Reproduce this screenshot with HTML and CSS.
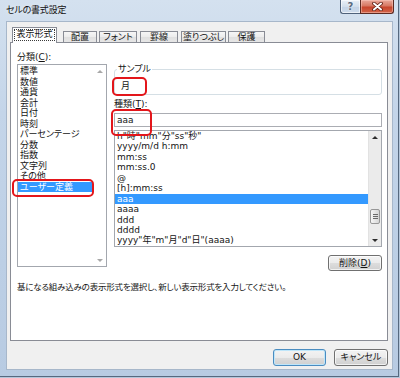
FILE: index.html
```html
<!DOCTYPE html>
<html lang="ja">
<head>
<meta charset="utf-8">
<title>セルの書式設定</title>
<link rel="stylesheet" href="styles.css">
</head>
<body>
<div class="window">
  <div class="titlebar">
    <span class="title">セルの書式設定</span>
    <div class="caption">
      <div class="cap-help">?</div>
      <div class="cap-close">
        <svg width="11" height="9" viewBox="0 0 11 9">
          <path d="M2 1.5 L9 7.5 M9 1.5 L2 7.5" stroke="#5a1a10" stroke-width="3.6" stroke-linecap="round"/>
          <path d="M2 1.5 L9 7.5 M9 1.5 L2 7.5" stroke="#ffffff" stroke-width="2" stroke-linecap="round"/>
        </svg>
      </div>
    </div>
  </div>
  <div class="client">
    <div class="tabs">
      <div class="tab active"><span class="focus">表示形式</span></div>
      <div class="tab w-haichi">配置</div>
      <div class="tab w-font">フォント</div>
      <div class="tab w-kei">罫線</div>
      <div class="tab w-nuri">塗りつぶし</div>
      <div class="tab w-hogo">保護</div>
    </div>
    <div class="panel">
      <div class="cols">
        <div class="col-left">
          <div class="label">分類(<u>C</u>):</div>
          <div class="listbox cat">
            <ul class="items">
              <li>標準</li>
              <li>数値</li>
              <li>通貨</li>
              <li>会計</li>
              <li>日付</li>
              <li>時刻</li>
              <li>パーセンテージ</li>
              <li>分数</li>
              <li>指数</li>
              <li>文字列</li>
              <li>その他</li>
              <li class="sel mark m-cat">ユーザー定義</li>
            </ul>
            <div class="vscroll off">
              <div class="sbtn up"></div>
              <div class="track"></div>
              <div class="sbtn down"></div>
            </div>
          </div>
        </div>
        <div class="col-right">
          <fieldset class="sample">
            <legend>サンプル</legend>
            <span class="sample-val mark m-sample">月</span>
          </fieldset>
          <div class="label t-label">種類(<u>T</u>):</div>
          <div class="textbox mark m-input">aaa</div>
          <div class="listbox fmt">
            <ul class="items">
              <li>h"時"mm"分"ss"秒"</li>
              <li>yyyy/m/d h:mm</li>
              <li>mm:ss</li>
              <li>mm:ss.0</li>
              <li>@</li>
              <li>[h]:mm:ss</li>
              <li class="sel">aaa</li>
              <li>aaaa</li>
              <li>ddd</li>
              <li>dddd</li>
              <li>yyyy"年"m"月"d"日"(aaaa)</li>
            </ul>
            <div class="vscroll">
              <div class="sbtn up"></div>
              <div class="track"><div class="thumb"><i></i><i></i><i></i></div></div>
              <div class="sbtn down"></div>
            </div>
          </div>
          <div class="del-row"><button class="btn del">削除(<u>D</u>)</button></div>
        </div>
      </div>
      <p class="desc">基になる組み込みの表示形式を選択し、新しい表示形式を入力してください。</p>
    </div>
    <div class="footer">
      <button class="btn ok">OK</button>
      <button class="btn cancel">キャンセル</button>
    </div>
  </div>
</div>
</body>
</html>
```
FILE: styles.css
```css
* { box-sizing: border-box; }
html, body { margin: 0; padding: 0; }
body {
  width: 400px;
  height: 378px;
  overflow: hidden;
  background: #b4c6da;
  font-family: "DejaVu Sans", "Noto Sans CJK JP", sans-serif;
  font-size: 9px;
  color: #141414;
  font-feature-settings: "palt";
}

.window {
  width: 399px;
  height: 377px;
  border-right: 1px solid #56697f;
  border-bottom: 1px solid #56697f;
  background: linear-gradient(#d4e1ef, #c4d5e9 30%, #bccfe5 70%, #b8cbe2);
  display: flex;
  flex-direction: column;
}

.titlebar {
  height: 21px;
  flex: none;
  display: flex;
  justify-content: space-between;
  align-items: flex-start;
  padding: 0 4px 0 6px;
}
.title {
  line-height: 20px;
  letter-spacing: -0.2px;
  color: #101010;
  text-shadow: 0 0 4px #e8f0f8;
}
.caption { display: flex; }
.cap-help {
  width: 20px;
  height: 14px;
  border: 1px solid #4f627b;
  border-top: 0;
  border-right: 0;
  border-radius: 0 0 0 3px;
  background: linear-gradient(#e9f0f8, #d3dfec 50%, #c3d3e6 51%, #cddbeb);
  box-shadow: inset 0 0 0 1px rgba(255,255,255,0.6);
  text-align: center;
  font-weight: bold;
  line-height: 13px;
  font-size: 10px;
  color: #5a6b80;
  text-shadow: 0 0 2px #fff;
}
.cap-close {
  width: 34px;
  height: 14px;
  border: 1px solid #5b2a22;
  border-top: 0;
  border-radius: 0 0 3px 0;
  background: linear-gradient(#e9a99b, #d77863 45%, #c7452c 55%, #d2664b);
  box-shadow: inset 0 0 0 1px rgba(255,210,200,0.45);
  display: flex;
  align-items: center;
  justify-content: center;
}

.client {
  flex: 1;
  margin: 0 5px 6px 6px;
  background: #f0f0f0;
  border: 1px solid #a7b7ca;
  padding: 5px 4px 3px 3px;
  display: flex;
  flex-direction: column;
}

/* tabs */
.tabs {
  display: flex;
  align-items: flex-start;
  height: 16px;
  padding-left: 2px;
  position: relative;
  z-index: 1;
  flex: none;
}
.tab {
  height: 11px;
  margin-top: 4px;
  border: 1px solid #898c95;
  border-bottom: 0;
  background: linear-gradient(#f6f6f6, #ececec 50%, #e0e0e0 51%, #e6e6e6);
  text-align: center;
  line-height: 10px;
  white-space: nowrap;
}
.tab.active {
  width: 45px;
  height: 16px;
  margin-top: 0;
  background: #fff;
  padding: 1px 1px 0;
}
.focus {
  display: block;
  height: 12px;
  line-height: 11px;
  outline: 1px dotted #3a3a3a;
  outline-offset: -1px;
}
.w-haichi { width: 34px; margin-left: 6px; }
.w-font { width: 38px; margin-left: 2px; }
.w-kei { width: 38px; margin-left: 3px; }
.w-nuri { width: 45px; margin-left: 3px; }
.w-hogo { width: 37px; margin-left: 2px; }

/* panel */
.panel {
  flex: none;
  margin-top: -1px;
  height: 299px;
  border: 1px solid #898c95;
  background: #fff;
  padding: 9px 5px 0 6px;
}
.cols { display: flex; gap: 7px; }
.col-left { width: 90px; flex: none; }
.col-right {
  width: 268px;
  flex: none;
  margin-top: 12px;
  display: flex;
  flex-direction: column;
}
.label { height: 11px; line-height: 11px; white-space: nowrap; }
.t-label { margin-top: 4px; }

.listbox {
  border: 1px solid #a3a7ae;
  background: #fff;
  display: flex;
}
.cat { height: 203px; margin-top: 1px; }
.fmt { height: 117px; margin-top: 3px; overflow: hidden; }

.items {
  list-style: none;
  margin: 0;
  padding: 0;
  flex: 1;
  min-width: 0;
}
.cat .items { padding-top: 1px; }
.items li {
  height: 10.5px;
  line-height: 10.5px;
  padding-left: 2px;
  white-space: nowrap;
}
.fmt .items li { height: 10.45px; line-height: 10.45px; }
.items li.sel { background: #3399ff; color: #fff; }

.vscroll {
  width: 13px;
  flex: none;
  display: flex;
  flex-direction: column;
}
.fmt .vscroll { background: #ebebeb; border-left: 1px solid #e2e2e2; }
.sbtn {
  height: 12px;
  flex: none;
  display: flex;
  align-items: center;
  justify-content: center;
}
.sbtn::before {
  content: "";
  border-left: 3px solid transparent;
  border-right: 3px solid transparent;
}
.sbtn.up::before { border-bottom: 3px solid #2c2c2c; }
.sbtn.down::before { border-top: 3px solid #2c2c2c; }
.off .sbtn.up::before { border-bottom-color: #a8a8a8; }
.off .sbtn.down::before { border-top-color: #a8a8a8; }
.track { flex: 1; }
.thumb {
  margin: 66px 1px 0 1px;
  height: 15px;
  border: 1px solid #979797;
  border-radius: 2px;
  background: linear-gradient(90deg, #f6f6f6, #e2e2e2 60%, #d6d6d6);
  display: flex;
  flex-direction: column;
  align-items: center;
  justify-content: center;
  gap: 1px;
}
.thumb i { display: block; width: 5px; height: 1px; background: #6a6a6a; }

/* sample group */
.sample {
  margin: 0;
  padding: 6px 2px 2px;
  border: 1px solid #d5dfe5;
  border-radius: 3px;
  min-width: 0;
}
.sample legend {
  padding: 0 1px;
  line-height: 11px;
}
.sample-val {
  display: inline-block;
  margin-left: 4px;
  line-height: 11px;
  vertical-align: top;
}

.textbox {
  margin-top: 3px;
  height: 14px;
  border: 1px solid #abadb3;
  background: #fff;
  padding-left: 2px;
  line-height: 12px;
}

/* buttons */
.btn {
  height: 16px;
  width: 54px;
  padding: 0;
  border: 1px solid #707070;
  border-radius: 3px;
  background: linear-gradient(#f3f3f3, #ebebeb 50%, #dddddd 51%, #d0d0d0);
  box-shadow: inset 0 0 0 1px rgba(255,255,255,0.7);
  font: inherit;
  color: #141414;
  line-height: 14px;
  text-align: center;
}
.del-row { display: flex; justify-content: flex-end; margin-top: 8px; }

.desc {
  margin: 11px 0 0;
  line-height: 11px;
  font-size: 8.5px;
  letter-spacing: -0.2px;
  white-space: nowrap;
}

.footer {
  display: flex;
  justify-content: flex-end;
  gap: 8px;
  margin-top: 8px;
  flex: none;
}
.footer .btn { height: 17px; line-height: 15px; }
.btn.ok {
  width: 53px;
  border-color: #4a8cc0;
  box-shadow: inset 0 0 0 1px #bfe6fa;
}

/* red highlight marks */
.mark { position: relative; }
.mark::after {
  content: "";
  position: absolute;
  border: 2px solid #e3161b;
  border-radius: 5px;
  z-index: 2;
}
.m-cat::after { left: -6px; top: -2.5px; right: -1px; bottom: -5px; }
.m-sample::after { left: -9px; top: -4px; width: 31px; height: 15px; }
.m-input::after { left: -4px; top: -5px; width: 37px; height: 23px; }
```
